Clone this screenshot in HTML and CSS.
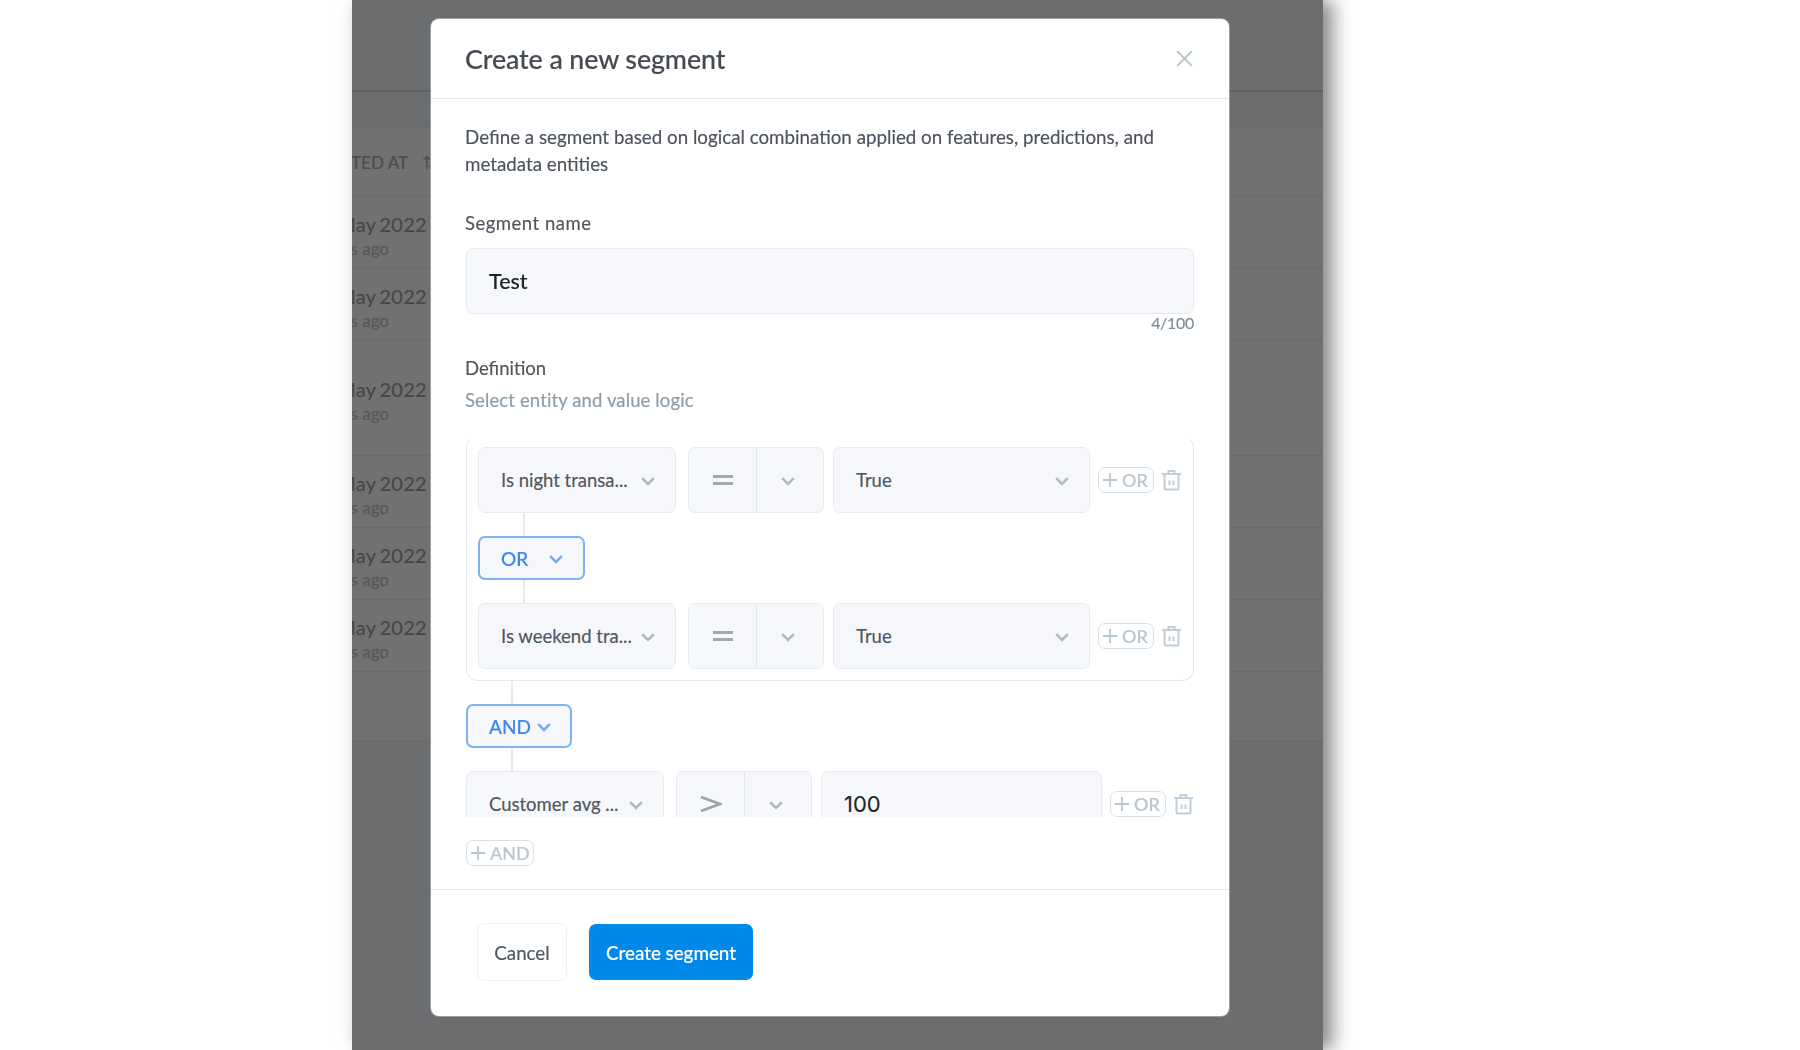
FILE: index.html
```html
<!DOCTYPE html>
<html lang="en">
<head>
<meta charset="utf-8">
<title>Create a new segment</title>
<link rel="stylesheet" href="styles.css">
</head>
<body>
<svg class="defs" width="0" height="0" aria-hidden="true">
  <symbol id="chev" viewBox="0 0 14 9"><path d="M1.200 1.200 7 7l5.800-5.800" fill="none" stroke="currentColor" stroke-width="2.500"/></symbol>
  <symbol id="eq" viewBox="0 0 20 10"><path d="M0 1.500h20M0 8.500h20" fill="none" stroke="currentColor" stroke-width="2.800"/></symbol>
  <symbol id="gt" viewBox="0 0 22 18"><path d="M1 2 20 9 1 16" fill="none" stroke="currentColor" stroke-width="2.600"/></symbol>
  <symbol id="plus" viewBox="0 0 16 16"><path d="M8 1v14M1 8h14" fill="none" stroke="currentColor" stroke-width="1.800"/></symbol>
  <symbol id="trash" viewBox="0 0 20 22"><path d="M0.500 5h19M7 4.500V2h6v2.500M3 5.500V19a1.500 1.500 0 0 0 1.500 1.500h11a1.500 1.500 0 0 0 1.500-1.500V5.500M8 11.500v4.500M12 11.500v4.500" fill="none" stroke="currentColor" stroke-width="2"/></symbol>
</svg>
<main class="drawer">
  <div class="bg-table">
    <div class="bg-top"></div>
    <div class="bg-sub"></div>
    <div class="bg-head"><span>CREATED AT</span><span class="bg-sort">⇅</span></div>
    <div class="bg-row"><b>25 May 2022</b><i>16 hours ago</i></div>
    <div class="bg-row"><b>25 May 2022</b><i>16 hours ago</i></div>
    <div class="bg-row bg-tall"><b>25 May 2022</b><i>16 hours ago</i></div>
    <div class="bg-row"><b>25 May 2022</b><i>16 hours ago</i></div>
    <div class="bg-row"><b>25 May 2022</b><i>16 hours ago</i></div>
    <div class="bg-row"><b>25 May 2022</b><i>16 hours ago</i></div>
    <div class="bg-row bg-last"></div>
  </div>
  <section class="modal">
    <header class="modal-head">
      <h1>Create a new segment</h1>
      <svg class="close" width="19" height="19" viewBox="0 0 18 18"><path d="M2 2l14 14M16 2 2 16" fill="none" stroke="currentColor" stroke-width="1.900"/></svg>
    </header>
    <div class="modal-body">
      <p class="desc">Define a segment based on logical combination applied on features, predictions, and metadata entities</p>
      <div class="label name-label">Segment name</div>
      <div class="name-input">Test</div>
      <div class="counter">4/100</div>
      <div class="label def-label">Definition</div>
      <div class="hint">Select entity and value logic</div>
      <div class="logic">
        <div class="group">
          <div class="row">
            <div class="field sel"><span>Is night transa...</span><svg class="chev"><use href="#chev"/></svg></div>
            <div class="op"><div class="op-sign"><svg class="eq"><use href="#eq"/></svg></div><div class="op-arrow"><svg class="chev"><use href="#chev"/></svg></div></div>
            <div class="field val"><span>True</span><svg class="chev"><use href="#chev"/></svg></div>
            <div class="add add-or"><svg class="plus"><use href="#plus"/></svg>OR</div>
            <svg class="trash"><use href="#trash"/></svg>
          </div>
          <div class="conn"></div>
          <div class="logic-pill pill-or"><span>OR</span><svg class="chev"><use href="#chev"/></svg></div>
          <div class="conn"></div>
          <div class="row">
            <div class="field sel"><span>Is weekend tra...</span><svg class="chev"><use href="#chev"/></svg></div>
            <div class="op"><div class="op-sign"><svg class="eq"><use href="#eq"/></svg></div><div class="op-arrow"><svg class="chev"><use href="#chev"/></svg></div></div>
            <div class="field val"><span>True</span><svg class="chev"><use href="#chev"/></svg></div>
            <div class="add add-or"><svg class="plus"><use href="#plus"/></svg>OR</div>
            <svg class="trash"><use href="#trash"/></svg>
          </div>
        </div>
        <div class="conn"></div>
        <div class="logic-pill pill-and"><span>AND</span><svg class="chev"><use href="#chev"/></svg></div>
        <div class="conn"></div>
        <div class="row">
          <div class="field sel"><span>Customer avg ...</span><svg class="chev"><use href="#chev"/></svg></div>
          <div class="op"><div class="op-sign"><svg class="gt"><use href="#gt"/></svg></div><div class="op-arrow"><svg class="chev"><use href="#chev"/></svg></div></div>
          <div class="field val num"><span>100</span></div>
          <div class="add add-or"><svg class="plus"><use href="#plus"/></svg>OR</div>
          <svg class="trash"><use href="#trash"/></svg>
        </div>
      </div>
      <div class="add add-and"><svg class="plus"><use href="#plus"/></svg>AND</div>
    </div>
    <footer class="modal-foot">
      <button class="btn cancel" type="button">Cancel</button>
      <button class="btn create" type="button">Create segment</button>
    </footer>
  </section>
</main>
</body>
</html>
```
FILE: styles.css
```css
* { box-sizing: border-box; }
html, body { margin: 0; height: 100%; background: #fff; overflow: hidden; }
body { font-family: "Lato", "Liberation Sans", sans-serif; color: #4f5760; -webkit-text-stroke: .15px; }
.defs { position: absolute; }

.drawer {
  position: relative;
  width: 971px;
  height: 1050px;
  margin-left: 352px;
  background: #6c6d6e;
  box-shadow: 10px 0 18px rgba(0,0,0,.45), 0 0 26px rgba(0,0,0,.05);
  overflow: hidden;
  filter: blur(.5px);
}

.bg-top { height: 92px; border-bottom: 2px solid #606162; }
.bg-sub { height: 36px; border-bottom: 1px solid #68696a; }
.bg-head {
  height: 69px;
  padding-right: 886px;
  background: #717171;
  border-bottom: 1px solid #6a6a6a;
  display: flex;
  justify-content: flex-end;
  align-items: center;
  gap: 14px;
  white-space: nowrap;
  font-size: 17px;
  color: #4a4c4e;
  overflow: hidden;
}
.bg-sort { font-size: 18px; color: #4f5153; }
.bg-row {
  height: 72px;
  padding: 6px 896px 0 0;
  background: #717171;
  border-bottom: 1px solid #6a6a6a;
  display: flex;
  flex-direction: column;
  justify-content: center;
  align-items: flex-end;
  white-space: nowrap;
}
.bg-tall { height: 115px; }
.bg-last { height: 69px; }
.bg-row b { font-weight: 400; font-size: 20px; line-height: 26px; letter-spacing: .3px; word-spacing: -2px; color: #454749; }
.bg-row i { font-style: normal; font-size: 17px; line-height: 24px; color: #56585a; padding-right: 38px; }

.modal {
  position: absolute;
  left: 79px;
  top: 19px;
  width: 798px;
  height: 997px;
  background: #fff;
  border-radius: 8px;
  box-shadow: 0 0 0 1px rgba(205,218,230,.45);
  display: flex;
  flex-direction: column;
}
.modal-head {
  height: 80px;
  flex: none;
  padding: 0 34px;
  border-bottom: 1px solid #dfe8ee;
  display: flex;
  align-items: center;
  justify-content: space-between;
}
.modal-head h1 { margin: 0; font-size: 26.800px; font-weight: 500; color: #434a52; letter-spacing: -.1px; }
.close { color: #b4c6d2; margin-right: 1px; }

.modal-body { padding: 25px 35px 23px; flex: none; }
.desc { margin: 0 0 0 -1px; font-size: 18.750px; line-height: 26.500px; color: #4c535b; }
.label { margin-left: -1px; font-size: 18.500px; line-height: 24px; color: #4f565e; }
.name-label { margin-top: 34px; letter-spacing: .5px; }
.name-input {
  margin-top: 13px;
  height: 66px;
  border: 1.500px solid #e5ebf1;
  border-radius: 7px;
  background: #f5f7fa;
  padding-left: 22px;
  display: flex;
  align-items: center;
  font-size: 21.500px;
  font-weight: 500;
  color: #1f2327;
}
.counter { font-size: 16px; line-height: 18px; text-align: right; color: #7f8e99; letter-spacing: -.3px; }
.def-label { margin-top: 24px; }
.hint { margin: 8px 0 0 -1px; font-size: 18.500px; line-height: 24px; color: #8b9ca8; letter-spacing: .12px; }

.logic { margin-top: 24px; height: 381px; overflow: hidden; }
.group {
  height: 245px;
  border: 1px solid #e3e9ef;
  border-top-color: transparent;
  border-radius: 12px;
  padding: 10px 11px;
}
.row { display: flex; align-items: center; height: 66px; }
.field, .op {
  height: 66px;
  background: #f5f7fa;
  border: 1.500px solid #e5ebf1;
  border-radius: 7px;
  flex: none;
  display: flex;
  align-items: center;
}
.field { padding: 0 20px 0 22px; justify-content: space-between; font-size: 18.500px; color: #4f565e; white-space: nowrap; }
.sel { width: 198px; margin-right: 12px; }
.op { width: 136px; margin-right: 9px; }
.val { flex: 1 1 0; margin-right: 8px; }
.num { font-family: "Inter", "Lato", sans-serif; font-size: 22px; color: #23272b; }
.op-sign { width: 68px; height: 100%; display: flex; align-items: center; justify-content: center; border-right: 1.500px solid #e0e6ec; }
.op-arrow { flex: 1; display: flex; align-items: center; justify-content: center; padding-right: 4px; }
.chev { width: 14px; height: 9px; color: #b0b8c0; margin-top: 3px; flex: none; }
.eq { width: 20px; height: 10px; color: #a0a8b0; }
.gt { width: 22px; height: 18px; color: #9aa3ab; }
.add {
  display: flex;
  align-items: center;
  height: 26px;
  border: 1.500px solid #d5e0e8;
  border-radius: 7px;
  color: #b8c6d1;
  font-size: 18px;
  font-weight: 500;
  flex: none;
}
.add-or { width: 56px; margin-right: 7px; padding-left: 3px; gap: 4px; }
.add-and { width: 68px; margin-top: 23px; padding-left: 3px; gap: 4px; }
.plus { width: 16px; height: 16px; flex: none; }
.trash { width: 21px; height: 22px; color: #c0ced9; flex: none; }
.conn { width: 1.500px; height: 23px; margin-left: 45px; background: #e5ebf1; }
.logic-pill {
  height: 44px;
  background: #f5f7fa;
  border: 2px solid #7fb2f5;
  border-radius: 7px;
  display: flex;
  align-items: center;
  color: #3d86ef;
  font-size: 19px;
  font-weight: 500;
}
.logic-pill .chev { color: #76a9f0; }
.pill-or { width: 107px; padding: 0 20px 0 21px; justify-content: space-between; }
.pill-and { width: 106px; padding: 0 19px 0 21px; justify-content: space-between; }

.modal-foot { flex: 1; border-top: 1.500px solid #e3e9ee; display: flex; align-items: center; padding: 0 0 2px 46px; }
.btn { font-family: inherit; font-size: 18.750px; border-radius: 7px; cursor: pointer; }
.cancel { width: 90px; height: 58px; background: #fff; border: 1.500px solid #eef1f4; color: #4f565e; }
.create { width: 164px; height: 56px; margin-left: 22px; background: #0088ea; border: 0; color: #fff; font-weight: 500; }
```
